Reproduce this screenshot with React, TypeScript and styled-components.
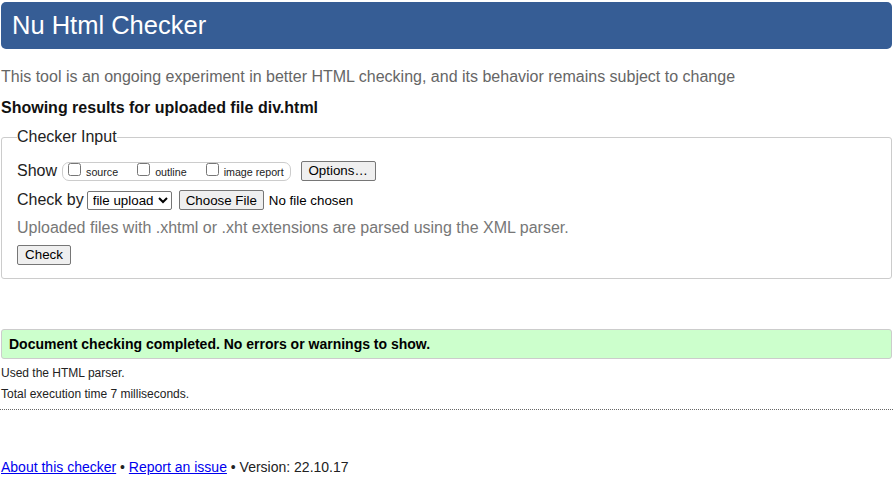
import React from "react";
import styled, { createGlobalStyle } from "styled-components";

const Global = createGlobalStyle`
  html, body { margin: 0; padding: 0; background: #fff; }
  body { font-family: "Liberation Sans", Arial, sans-serif; color: #111; }
`;

const Page = styled.div`
  padding: 2px 1px 0 1px;
  width: 891px;
`;

const Header = styled.h1`
  margin: 0;
  height: 47px;
  background: #365d95;
  color: #fff;
  border-radius: 5px;
  font-size: 25.5px;
  font-weight: normal;
  display: flex;
  align-items: center;
  padding: 0 11px;
  box-sizing: border-box;
`;

const Intro = styled.p`
  margin: 18px 0 0 0;
  font-size: 16px;
  line-height: 19px;
  color: #666;
`;

const Showing = styled.p`
  margin: 12px 0 0 0;
  font-size: 16px;
  line-height: 19px;
  font-weight: bold;
`;

const Fieldset = styled.fieldset`
  margin: 11px 0 0 0;
  padding: 0 15px 13px 15px;
  border: 1px solid #ccc;
  border-radius: 3px;
  box-sizing: border-box;
`;

const Legend = styled.legend`
  padding: 0;
  font-size: 16px;
  color: #222;
`;

const Row = styled.div<{ $mt: number }>`
  display: flex;
  align-items: center;
  font-size: 16px;
  color: #222;
  margin-top: ${(p) => p.$mt}px;
`;

const Label = styled.span<{ $mr: number }>`
  margin-right: ${(p) => p.$mr}px;
`;

const OptionGroup = styled.div`
  display: flex;
  align-items: flex-start;
  border: 1px solid #ccc;
  border-radius: 7px;
  height: 19px;
  box-sizing: border-box;
  padding: 0 6px 0 5px;
`;

const Opt = styled.label<{ $mr: number }>`
  display: flex;
  align-items: flex-start;
  margin-right: ${(p) => p.$mr}px;
`;

const Box = styled.input`
  width: 13px;
  height: 13px;
  margin: 0 5px 0 0;
`;

const OptText = styled.span`
  font-size: 10.7px;
  line-height: 12px;
  padding-top: 3px;
  color: #222;
`;

const Button = styled.button`
  font-family: "Liberation Sans", Arial, sans-serif;
  font-size: 13.33px;
  color: #000;
  background: #efefef;
  border: 1px solid #767676;
  border-radius: 2px;
  height: 20px;
  padding: 0 6px;
  line-height: 1;
`;

const OptionsButton = styled(Button)`
  margin-left: 10px;
  width: 75px;
`;

const Select = styled.select`
  font-family: "Liberation Sans", Arial, sans-serif;
  font-size: 13.33px;
  height: 19px;
  width: 85px;
  color: #000;
  border: 1px solid #767676;
  border-radius: 2px;
  background: #fff;
  padding: 0 0 0 1px;
`;

const FileInput = styled.input`
  font-family: "Liberation Sans", Arial, sans-serif;
  font-size: 13.33px;
  color: #000;
  margin-left: 7px;
  &::file-selector-button {
    font-family: "Liberation Sans", Arial, sans-serif;
    font-size: 13.33px;
    color: #000;
    background: #efefef;
    border: 1px solid #767676;
    border-radius: 2px;
    height: 20px;
    padding: 0 6px;
    margin-right: 5px;
  }
`;

const Note = styled.div`
  margin-top: 8px;
  font-size: 16px;
  line-height: 19px;
  color: #777;
`;

const CheckButton = styled(Button)`
  margin-top: 8px;
  width: 54px;
`;

const Success = styled.div`
  margin-top: 50px;
  height: 30px;
  box-sizing: border-box;
  background: #ccffcc;
  border: 1px solid #ccc;
  border-radius: 3px;
  padding: 0 7px;
  display: flex;
  align-items: center;
  font-size: 14px;
  font-weight: bold;
  color: #000;
`;

const Small = styled.p<{ $mt: number }>`
  margin: ${(p) => p.$mt}px 0 0 0;
  font-size: 12px;
  line-height: 14px;
  color: #222;
`;

const Dotted = styled.hr`
  margin: 8px -1px 0 -1px;
  border: none;
  border-top: 1px dotted #666;
  height: 0;
`;

const Footer = styled.p`
  margin: 49px 0 0 0;
  font-size: 14px;
  line-height: 16px;
  color: #222;
`;

const Link = styled.a`
  color: #0000ee;
  text-decoration: underline;
`;

export default function App() {
  return (
    <>
      <Global />
      <Page>
        <Header>Nu Html Checker</Header>
        <Intro>
          This tool is an ongoing experiment in better HTML checking, and its
          behavior remains subject to change
        </Intro>
        <Showing>Showing results for uploaded file div.html</Showing>
        <Fieldset>
          <Legend>Checker Input</Legend>
          <Row $mt={15}>
            <Label $mr={5}>Show</Label>
            <OptionGroup>
              <Opt $mr={19}>
                <Box type="checkbox" />
                <OptText>source</OptText>
              </Opt>
              <Opt $mr={19}>
                <Box type="checkbox" />
                <OptText>outline</OptText>
              </Opt>
              <Opt $mr={0}>
                <Box type="checkbox" />
                <OptText>image report</OptText>
              </Opt>
            </OptionGroup>
            <OptionsButton>Options…</OptionsButton>
          </Row>
          <Row $mt={9}>
            <Label $mr={3}>Check by</Label>
            <Select defaultValue="file">
              <option value="file">file upload</option>
              <option value="address">address</option>
              <option value="text">text input</option>
            </Select>
            <FileInput type="file" />
          </Row>
          <Note>
            Uploaded files with .xhtml or .xht extensions are parsed using the
            XML parser.
          </Note>
          <CheckButton>Check</CheckButton>
        </Fieldset>
        <Success>Document checking completed. No errors or warnings to show.</Success>
        <Small $mt={7}>Used the HTML parser.</Small>
        <Small $mt={7}>Total execution time 7 milliseconds.</Small>
        <Dotted />
        <Footer>
          <Link href="#">About this checker</Link> •{" "}
          <Link href="#">Report an issue</Link> • Version: 22.10.17
        </Footer>
      </Page>
    </>
  );
}
